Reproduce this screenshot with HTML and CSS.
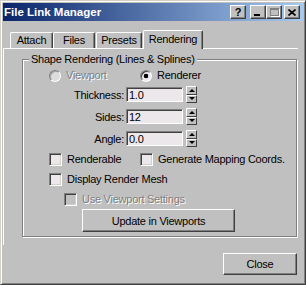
FILE: index.html
```html
<!DOCTYPE html>
<html lang="en">
<head>
  <meta charset="UTF-8" />
  <title>File Link Manager</title>
  <link rel="stylesheet" href="styles.css">
</head>
<body>

<div class="window">
  <div class="titlebar">
    <span class="title">File Link Manager</span>
    <span class="cbtn help">?</span>
    <span class="cbtn min"><i></i></span>
    <span class="cbtn max"><i></i></span>
    <span class="cbtn close">
      <svg width="8" height="7" viewBox="0 0 8 7"><path d="M0.5 0.5 L7.5 6.5 M7.5 0.5 L0.5 6.5" stroke="#000" stroke-width="1.6" fill="none"/></svg>
    </span>
  </div>

  <div class="tabs">
    <div class="tab tab-attach">Attach</div>
    <div class="tab tab-files">Files</div>
    <div class="tab tab-presets">Presets</div>
    <div class="tab tab-rendering active">Rendering</div>
  </div>

  <div class="panel">
    <div class="group">
      <span class="group-label">Shape Rendering (Lines &amp; Splines)</span>

      <div class="radio-row">
        <label class="item first disabled"><span class="radio"></span>Viewport</label>
        <label class="item"><span class="radio on"></span>Renderer</label>
      </div>

      <div class="spin-row first">
        <span class="spin-label">Thickness:</span>
        <input class="num" type="text" value="1.0">
        <span class="spinner"><span class="up"></span><span class="down"></span></span>
      </div>
      <div class="spin-row">
        <span class="spin-label">Sides:</span>
        <input class="num" type="text" value="12">
        <span class="spinner"><span class="up"></span><span class="down"></span></span>
      </div>
      <div class="spin-row">
        <span class="spin-label">Angle:</span>
        <input class="num" type="text" value="0.0">
        <span class="spinner"><span class="up"></span><span class="down"></span></span>
      </div>

      <div class="check-row first">
        <label class="item first"><span class="check"></span>Renderable</label>
        <label class="item"><span class="check"></span>Generate Mapping Coords.</label>
      </div>
      <div class="check-row">
        <label class="item"><span class="check"></span>Display Render Mesh</label>
      </div>
      <div class="check-row indent">
        <label class="item disabled"><span class="check"></span>Use Viewport Settings</label>
      </div>

      <button class="btn update">Update in Viewports</button>
    </div>
  </div>

  <div class="footer">
    <button class="btn close-btn">Close</button>
  </div>
</div>

</body>
</html>
```

FILE: styles.css
```css
body {
  margin: 0;
  font-family: "Liberation Sans", Arial, sans-serif;
  font-size: 11px;
  letter-spacing: -0.25px;
  color: #000;
  background: #c0c0c0;
}

.window {
  box-sizing: border-box;
  width: 306px;
  height: 285px;
  overflow: hidden;
  background: #c0c0c0;
  border: 1px solid;
  border-color: #d4d0c8 #404040 #404040 #d4d0c8;
  box-shadow: inset 1px 1px 0 #fff, inset -1px -1px 0 #808080;
  padding: 2px;
}

/* title bar */
.titlebar {
  height: 18px;
  display: flex;
  align-items: flex-start;
  background: linear-gradient(to right, #0a246a, #a6caf0);
  padding-right: 3px;
}

.title {
  color: #fff;
  font-weight: bold;
  font-size: 11.5px;
  letter-spacing: 0;
  line-height: 18px;
  padding-left: 1px;
  margin-right: auto;
}

.cbtn {
  box-sizing: border-box;
  width: 16px;
  height: 14px;
  margin-top: 2px;
  background: #c0c0c0;
  border: 1px solid;
  border-color: #fff #404040 #404040 #fff;
  box-shadow: inset -1px -1px 0 #808080;
  display: flex;
  align-items: center;
  justify-content: center;
}

.cbtn.help {
  font-weight: bold;
  font-size: 11px;
  line-height: 12px;
  margin-right: 4px;
}

.cbtn.min {
  align-items: flex-end;
  justify-content: flex-start;
  padding: 0 0 2px 3px;
}

.cbtn.min i {
  width: 6px;
  height: 2px;
  background: #000;
}

.cbtn.max i {
  box-sizing: border-box;
  width: 9px;
  height: 8px;
  border: 1px solid #808080;
  border-top-width: 2px;
  box-shadow: 1px 1px 0 #fff;
}

.cbtn.close {
  margin-left: 2px;
}

.cbtn svg {
  display: block;
}

/* tabs */
.tabs {
  display: flex;
  align-items: flex-end;
  height: 18px;
  margin-top: 9px;
  padding-left: 7px;
}

.tab {
  box-sizing: border-box;
  height: 16px;
  line-height: 15px;
  text-align: center;
  border-top: 1px solid #fff;
  border-left: 1px solid #fff;
  border-right: 1px solid #404040;
  box-shadow: inset -1px 0 0 #808080;
  border-radius: 2px 2px 0 0;
  background: #c0c0c0;
}

.tab-attach { width: 43px; }
.tab-files { width: 42px; margin-right: 1px; }
.tab-presets { width: 46px; margin-right: 1px; }
.tab-rendering { width: 60px; }

.tab.active {
  height: 19px;
  line-height: 17px;
  margin-bottom: -1px;
  position: relative;
  z-index: 1;
}

/* panel */
.panel {
  margin-right: 5px;
  border-top: 1px solid #fff;
  border-left: 1px solid #fff;
  padding: 10px 1px 8px 18px;
}

.group {
  display: flex;
  flex-direction: column;
  align-items: flex-start;
  border: 1px solid #808080;
  box-shadow: inset 1px 1px 0 #fff, 1px 1px 0 #fff;
  padding-bottom: 4px;
}

.group-label {
  margin: -7px 0 0 6px;
  padding: 0 2px;
  line-height: 13px;
  background: #c0c0c0;
}

.item {
  display: flex;
  align-items: center;
  gap: 5px;
  height: 13px;
  line-height: 13px;
  white-space: nowrap;
}

.item.first {
  width: 91px;
}

.disabled {
  color: #808080;
  text-shadow: 1px 1px 0 #fff;
}

.radio-row,
.check-row {
  display: flex;
  padding-left: 26px;
}

.radio-row {
  margin-top: 3px;
}

.radio {
  box-sizing: border-box;
  width: 12px;
  height: 12px;
  border-radius: 50%;
  border: 1px solid;
  border-color: #808080 #fff #fff #808080;
  box-shadow: inset 1px 1px 0 #404040;
  background: #ebe7eb;
}

.disabled .radio {
  box-shadow: inset 1px 1px 0 #a0a0a0;
  background: #dcdcdc;
}

.radio.on {
  background: radial-gradient(circle, #000 2px, #ebe7eb 2.6px);
}

/* spinner rows */
.spin-row {
  display: flex;
  align-items: center;
  height: 17px;
  margin-top: 5px;
}

.spin-row.first {
  margin-top: 4px;
}

.spin-label {
  width: 101px;
  text-align: right;
  margin-right: 2px;
}

.num {
  box-sizing: border-box;
  width: 57px;
  height: 15px;
  margin: 0;
  padding: 0 0 0 2px;
  font: inherit;
  letter-spacing: inherit;
  line-height: 13px;
  color: #000;
  background: #ebe7eb;
  border: 1px solid;
  border-color: #808080 #fff #fff #808080;
  box-shadow: inset 1px 1px 0 #404040;
  outline: none;
}

.spinner {
  display: flex;
  flex-direction: column;
  width: 11px;
  height: 17px;
  margin-left: 3px;
}

.spinner span {
  box-sizing: border-box;
  flex: 1;
  display: flex;
  align-items: center;
  justify-content: center;
  border: 1px solid;
  border-color: #fff #404040 #404040 #fff;
  background: #c0c0c0;
}

.spinner span::after {
  content: "";
  width: 0;
  height: 0;
  border-left: 3px solid transparent;
  border-right: 3px solid transparent;
}

.spinner .up::after {
  border-bottom: 3px solid #000;
}

.spinner .down::after {
  border-top: 3px solid #000;
}

/* checkbox rows */
.check-row {
  margin-top: 7px;
}

.check-row.first {
  margin-top: 6px;
}

.check-row.indent {
  padding-left: 41px;
}

.check {
  box-sizing: border-box;
  width: 13px;
  height: 13px;
  border: 1px solid;
  border-color: #808080 #fff #fff #808080;
  box-shadow: inset 1px 1px 0 #404040, inset -1px -1px 0 #d4d0c8;
  background: #ebe7eb;
}

.item .check + * {
  margin-left: 1px;
}

.disabled .check {
  background: #c0c0c0;
}

/* buttons */
.btn {
  box-sizing: border-box;
  font: inherit;
  letter-spacing: inherit;
  color: #000;
  background: #c0c0c0;
  border: 1px solid;
  border-color: #fff #404040 #404040 #fff;
  box-shadow: inset -1px -1px 0 #808080;
  padding: 0;
}

.btn.update {
  width: 153px;
  height: 23px;
  margin: 3px 0 0 59px;
}

.footer {
  display: flex;
  justify-content: flex-end;
  margin-top: 8px;
  padding-right: 6px;
}

.btn.close-btn {
  width: 74px;
  height: 22px;
}
```
